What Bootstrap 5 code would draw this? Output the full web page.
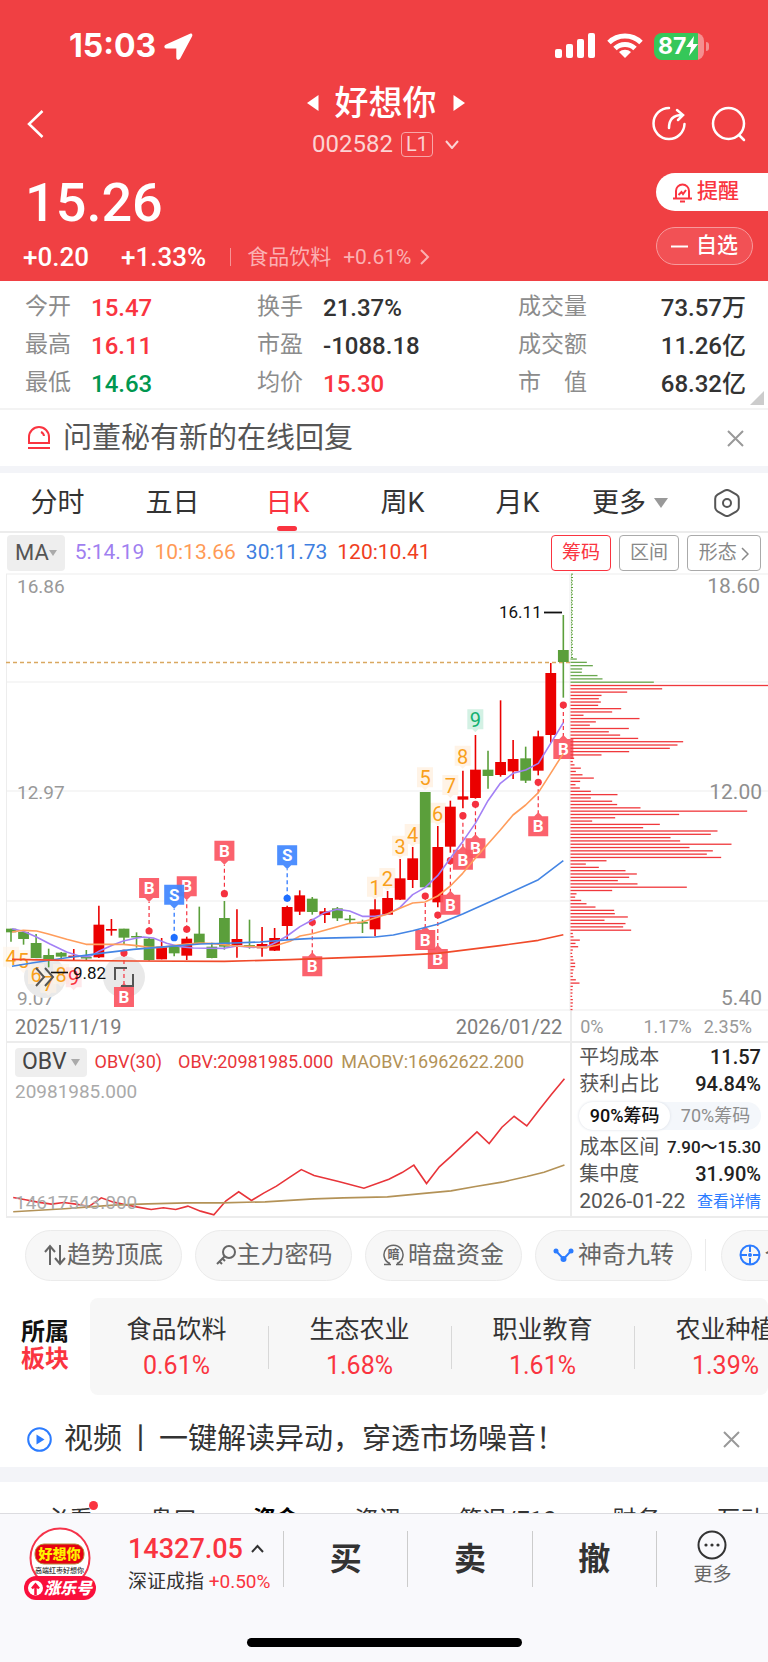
<!DOCTYPE html>
<html lang="zh-CN">
<head>
<meta charset="utf-8">
<meta name="viewport" content="width=device-width, initial-scale=1">
<title>好想你 002582</title>
<link rel="stylesheet" href="https://cdn.jsdelivr.net/npm/bootstrap@5.3.0/dist/css/bootstrap.min.css">
<style>
  :root { --up: #fa3440; --brand: #f04043; --grey: #8c8c8c; --ink: #333; --rule: #ececec; --band: #f3f4f8; }
  body { font-family: Roboto, "Noto Sans CJK SC", sans-serif; color: var(--ink); background: #fff; line-height: 1.2; overflow-x: hidden; }
  button { font-family: inherit; color: inherit; background: none; border: 0; padding: 0; white-space: nowrap; line-height: inherit; }
  a { color: inherit; text-decoration: none; white-space: nowrap; }
  svg { display: block; flex: none; }
  .nowrap { white-space: nowrap; }
  .up { color: var(--up); } .down { color: #00974f; }

  .hero { background: var(--brand); color: #fff; height: 281px; }
  .status { height: 83px; padding: 9px 59px 0 69px; }
  .clock { font: 700 32px/32px Inter, sans-serif; }
  .battery { width: 50px; height: 27px; border-radius: 8px; background: linear-gradient(90deg, #35c759 88%, #f58f90 88%); font: 700 23px/27px Inter, sans-serif; }
  .nub { width: 3px; height: 9px; border-radius: 0 4px 4px 0; background: #f58f90; margin-left: 2px; }
  .titlebar { height: 82px; padding: 0 22px 0 27px; }
  .title-block { padding-left: 75px; }
  .stock-name { font-size: 34px; line-height: 40px; font-weight: 500; margin: 0; }
  .code { font-size: 24px; line-height: 42px; color: #fbd3d4; }
  .level { border: 1px solid #f8a6a8; border-radius: 4px; font-size: 20px; line-height: 23px; padding: 0 4px; }
  .price { font-size: 54px; line-height: 60px; font-weight: 500; padding: 8px 0 0 25px; }
  .delta { font-size: 26px; line-height: 32px; font-weight: 500; padding: 8px 0 0 23px; }
  .industry { font-size: 21px; color: #fbb0b2; }
  .sep-v { width: 1px; height: 18px; background: #f79496; }
  .remind { width: 112px; height: 38px; border-radius: 19px 0 0 19px; background: #fff; color: var(--up); font-size: 21px; font-weight: 500; }
  .fav { width: 97px; height: 38px; border-radius: 19px; border: 1px solid #f79a9c; background: #f25155; font-size: 21px; font-weight: 500; margin-right: 15px; }

  .quotes { display: grid; grid-template-columns: 232fr 261fr 228fr; padding: 8px 22px 5px 25px; height: 127px; position: relative; font-size: 23px; line-height: 38px; }
  .quotes dt { font-weight: 400; color: var(--grey); line-height: 36px; }
  .quotes dd { margin: 0; font-size: 24px; font-weight: 500; }
  .corner { position: absolute; right: 4px; bottom: 3px; }
  .notice { height: 58px; border-top: 2px solid #f3f3f3; padding: 0 24px 0 27px; font-size: 29px; color: #555; }
  .band { height: 7px; background: var(--band); }
  .band-lg { height: 15px; }
  .periods { display: grid; grid-template-columns: repeat(5, 115fr) 110fr 83fr; align-items: center; justify-items: center; height: 60px; padding-top: 2px; border-bottom: 2px solid var(--rule); font-size: 27px; }
  .periods .active { color: var(--up); position: relative; }
  .periods .active::after { content: ""; position: absolute; left: 50%; margin-left: -10px; bottom: -12px; width: 20px; height: 5px; border-radius: 3px; background: var(--up); }
  .ma-row { height: 40px; padding: 0 7px; font-size: 21px; gap: 10px; }
  .drop { background: #eee; border-radius: 4px; color: #555; font-size: 22px; height: 36px; padding: 0 8px; }
  .outline { border: 1px solid #aaa; border-radius: 4px; height: 36px; width: 60px; color: #888; font-size: 19px; }
  .outline.wide { width: 74px; }
  .outline.on { border-color: var(--up); color: var(--up); }

  .lower { display: grid; grid-template-columns: 566fr 196fr; margin-left: 6px; border-left: 1px solid var(--rule); }
  .lower > * { border-bottom: 2px solid var(--rule); }
  .lower > :nth-child(odd) { border-right: 2px solid var(--rule); }
  .dates { height: 32px; font-size: 20px; line-height: 32px; color: #7d7d7d; padding: 0 8px; }
  .scale { font-size: 18px; color: #999; }
  .obv-row { height: 35px; padding: 3px 0 0 8px; font-size: 18px; }
  .obv-row .drop { height: 29px; font-size: 23px; color: #444; padding: 0 7px; }
  .cost { font-size: 20px; padding: 1px 7px 0 7px; line-height: 27px; color: #555; }
  .cost b { font-weight: 500; color: #222; }
  .cost .range { font-size: 17px; }
  .cost .day { font-size: 21px; }
  .cost .detail { font-size: 16px; color: #2c7cff; }
  .pill { height: 28px; border-radius: 14px; background: #f4f7fb; font-size: 18px; line-height: 28px; margin: 4px 0; }
  .pill button { flex: 1; border-radius: 14px; color: #8e8e8e; }
  .pill .on { background: #fff; color: #111; font-weight: 500; box-shadow: 0 0 3px #d9dde4; }

  .tools { padding: 12px 0 17px 25px; gap: 13px; overflow: hidden; }
  .tool { flex: none; width: 157px; height: 51px; border: 1px solid #ebebeb; border-radius: 26px; background: #f7f7f7; color: #666; font-size: 24px; }
  .tool-sep { width: 1px; height: 32px; background: #eaeaea; flex: none; margin-right: 2px; }
  .sector-title { width: 90px; font-size: 24px; font-weight: 700; line-height: 27px; color: #111; }
  .sectors { background: #f7f7f7; border-radius: 8px; height: 97px; overflow: hidden; }
  .sector { flex: 0 0 183px; font-size: 25px; line-height: 36px; position: relative; padding-top: 3px; }
  .sector:first-child { flex-basis: 178px; padding-right: 5px; }
  .sector + .sector::before { content: ""; position: absolute; left: 0; top: 17px; height: 43px; border-left: 1px solid #d8d8d8; }
  .video { height: 72px; padding: 18px 28px 0 27px; font-size: 29px; }
  .subtabs { height: 31px; overflow: hidden; padding: 22px 0 0 45px; font-size: 24px; gap: 56px; line-height: 32px; }
  .dot { position: absolute; width: 9px; height: 9px; border-radius: 50%; background: var(--up); right: -5px; top: -3px; }

  .trade { height: 149px; background: #f9f9fc; border-top: 1px solid #dcdce0; position: sticky; bottom: 0; }
  .trade-row { height: 88px; padding-top: 13px; }
  .index-box { width: 155px; padding-top: 5px; }
  .index-val { font-size: 27px; line-height: 34px; font-weight: 500; }
  .index-sub { font-size: 19px; line-height: 32px; }
  .act { flex: 1 1 124px; font-size: 32px; font-weight: 700; border-left: 1px solid #ccc; height: 56px; margin-top: 4px; }
  .more { flex: 0 0 112px; border-left: 1px solid #ccc; height: 56px; margin-top: 4px; font-size: 19px; color: #666; }
  .home { width: 275px; height: 9px; border-radius: 5px; background: #000; margin: 36px auto 0; }
</style>
</head>
<body>
<header class="hero d-flex flex-column">
  <div class="status d-flex align-items-center">
    <span class="clock">15:03</span>
    <svg class="ms-2" width="29" height="27" viewBox="0 0 29 27"><path d="M26.500 .6 2 11.500c-2.500 1.200-2 4 .8 4h9.500v9c0 2.800 3 3.200 4.200.6L28 3.500c1-2-.2-3.300-1.500-2.900z" fill="#fff"/></svg>
    <svg class="ms-auto" width="41" height="26" viewBox="0 0 41 26" fill="#fff"><rect y="16" width="7" height="9" rx="2"/><rect x="11" y="11" width="7" height="14" rx="2"/><rect x="22" y="6" width="7" height="19" rx="2"/><rect x="33" width="7" height="25" rx="2"/></svg>
    <svg class="mx-2" width="42" height="26" viewBox="0 0 42 26" fill="none" stroke="#fff" stroke-width="5"><path d="M5 9.500a23 23 0 0 1 32 0M11 15.500a14.500 14.500 0 0 1 20 0"/><path d="M21 25l-6-6a9 9 0 0 1 12 0z" fill="#fff" stroke="none"/></svg>
    <span class="battery d-flex align-items-center ps-1">87<svg width="12" height="22" viewBox="0 0 12 22"><path d="M8 1 0 12h5l-2 9 9-12H7z" fill="#fff"/></svg></span><span class="nub"></span>
  </div>
  <div class="titlebar d-flex align-items-center">
    <button aria-label="返回"><svg width="17" height="28" viewBox="0 0 17 28" fill="none" stroke="#fff" stroke-width="2.500"><path d="M15.500 1 2 14l13.500 13"/></svg></button>
    <div class="title-block flex-grow-1 d-flex flex-column align-items-center">
      <div class="d-flex align-items-center gap-3">
        <button aria-label="上一只"><svg width="12" height="16" viewBox="0 0 12 16"><path d="M11.500 0v16L0 8z" fill="#fff"/></svg></button>
        <h1 class="stock-name nowrap">好想你</h1>
        <button aria-label="下一只"><svg width="12" height="16" viewBox="0 0 12 16"><path d="M.5 0v16L12 8z" fill="#fff"/></svg></button>
      </div>
      <div class="code d-flex align-items-center gap-2">002582 <span class="level">L1</span><svg class="ms-1" width="14" height="9" viewBox="0 0 14 9" fill="none" stroke="#fbd3d4" stroke-width="2"><path d="M1 1l6 7 6-7"/></svg></div>
    </div>
    <button aria-label="分享"><svg width="34" height="36" viewBox="0 0 34 36" fill="none" stroke="#fff" stroke-width="2.500" stroke-linecap="round"><path d="M17 2a15.500 15.500 0 1 0 15.500 16M17 22c0-8 4-13 13-13M25 4l6 5-5 5"/></svg></button>
    <button class="ms-4" aria-label="搜索"><svg width="36" height="36" viewBox="0 0 36 36" fill="none" stroke="#fff" stroke-width="2.500" stroke-linecap="round"><circle cx="18.500" cy="17.500" r="15.500"/><path d="M29 29l5 5"/></svg></button>
  </div>
  <div class="d-flex flex-grow-1">
    <div class="flex-grow-1">
      <div class="price">15.26</div>
      <div class="delta d-flex align-items-center nowrap"><span>+0.20</span><span class="ms-4 ps-2">+1.33%</span><span class="sep-v ms-4"></span><a href="#" class="industry fw-normal d-flex align-items-center ms-3">食品饮料<span class="ms-2 ps-1">+0.61%</span><svg class="ms-2" width="11" height="16" viewBox="0 0 11 16" fill="none" stroke="#fbb0b2" stroke-width="2"><path d="M2 1l7 7-7 7"/></svg></a></div>
    </div>
    <div class="d-flex flex-column align-items-start gap-3 pt-2">
      <button class="remind d-flex align-items-center ps-3"><svg class="me-1" width="21" height="21" viewBox="0 0 21 21" fill="none" stroke="#fa3440" stroke-width="2"><path d="M4 16V9a6.500 6.500 0 0 1 13 0v7M1 16.500h19M8 19.500h5M6.500 13l3-3 1.500 2 3-4"/></svg>提醒</button>
      <button class="fav d-flex align-items-center justify-content-center gap-2"><svg width="17" height="3"><path d="M0 1.500h17" stroke="#fff" stroke-width="2"/></svg>自选</button>
    </div>
  </div>
</header>

<main>
  <section class="quotes nowrap">
    <dl class="m-0">
      <div class="d-flex"><dt class="me-3 pe-1">今开</dt><dd class="up">15.47</dd></div>
      <div class="d-flex"><dt class="me-3 pe-1">最高</dt><dd class="up">16.11</dd></div>
      <div class="d-flex"><dt class="me-3 pe-1">最低</dt><dd class="down">14.63</dd></div>
    </dl>
    <dl class="m-0">
      <div class="d-flex"><dt class="me-3 pe-1">换手</dt><dd>21.37%</dd></div>
      <div class="d-flex"><dt class="me-3 pe-1">市盈</dt><dd>-1088.18</dd></div>
      <div class="d-flex"><dt class="me-3 pe-1">均价</dt><dd class="up">15.30</dd></div>
    </dl>
    <dl class="m-0">
      <div class="d-flex justify-content-between"><dt>成交量</dt><dd>73.57万</dd></div>
      <div class="d-flex justify-content-between"><dt>成交额</dt><dd>11.26亿</dd></div>
      <div class="d-flex justify-content-between"><dt>市　值</dt><dd>68.32亿</dd></div>
    </dl>
    <svg class="corner" width="14" height="14"><path d="M14 0v14H0z" fill="#ccc"/></svg>
  </section>

  <section class="notice d-flex align-items-center nowrap">
    <svg width="24" height="24" viewBox="0 0 24 24" fill="none" stroke="#fa3440" stroke-width="2"><path d="M2 17v-6a10 10 0 0 1 20 0v6zM1 22h22M14 6a5 5 0 0 1 3 4"/></svg>
    <span class="ms-2 ps-1">问董秘有新的在线回复</span>
    <button class="ms-auto" aria-label="关闭"><svg width="17" height="17" viewBox="0 0 17 17" stroke="#999" stroke-width="2"><path d="M1 1l15 15M16 1 1 16"/></svg></button>
  </section>
  <div class="band"></div>

  <nav class="periods">
    <a href="#">分时</a><a href="#">五日</a><a href="#" class="active">日K</a><a href="#">周K</a><a href="#">月K</a>
    <button class="d-flex align-items-center gap-2">更多 <svg width="14" height="10"><path d="M0 0h14L7 10z" fill="#999"/></svg></button>
    <button aria-label="设置"><svg width="26" height="28" viewBox="0 0 26 28" fill="none" stroke="#555" stroke-width="2"><path d="M10.500 1.700a5 5 0 0 1 5 0l7 4a5 5 0 0 1 2.300 4v8.600a5 5 0 0 1-2.300 4l-7 4a5 5 0 0 1-5 0l-7-4a5 5 0 0 1-2.300-4V9.700a5 5 0 0 1 2.300-4z"/><circle cx="13" cy="14" r="4"/></svg></button>
  </nav>

  <div class="ma-row d-flex align-items-center nowrap">
    <button class="drop d-flex align-items-center">MA<svg width="8" height="6"><path d="M0 0h8L4 6z" fill="#aaa"/></svg></button>
    <span style="color:#a07ff0">5:14.19</span><span style="color:#ff9a56">10:13.66</span><span style="color:#3f7fe0">30:11.73</span><span style="color:#f03e1e">120:10.41</span>
    <div class="d-flex gap-2 ms-auto">
      <button class="outline on">筹码</button><button class="outline">区间</button><button class="outline wide">形态 <svg class="d-inline" width="8" height="14" viewBox="0 0 8 14" fill="none" stroke="#888" stroke-width="1.500"><path d="M1 1l6 6-6 6"/></svg></button>
    </div>
  </div>

  <svg id="kline" class="w-100" viewBox="0 0 768 438" role="img" aria-label="日K线与筹码分布" font-family="Roboto, sans-serif"></svg>

  <section class="lower nowrap">
    <div class="dates d-flex justify-content-between"><span>2025/11/19</span><span>2026/01/22</span></div>
    <div class="dates scale d-flex"><span>0%</span><span class="ms-auto">1.17%</span><span class="mx-2 ps-1">2.35%</span></div>
    <div>
      <div class="obv-row d-flex align-items-center">
        <button class="drop d-flex align-items-center gap-1">OBV <svg width="9" height="7"><path d="M0 0h9L4.500 7z" fill="#aaa"/></svg></button>
        <span class="ms-2" style="color:#e8353a">OBV(30)</span><span class="ms-3" style="color:#e8353a">OBV:20981985.000</span><span class="ms-2" style="color:#b39257">MAOBV:16962622.200</span>
      </div>
      <svg id="obv" class="w-100" viewBox="6 1078 564 138" role="img" aria-label="OBV" font-family="Roboto, sans-serif"></svg>
    </div>
    <div class="cost">
      <div class="d-flex justify-content-between"><span>平均成本</span><b>11.57</b></div>
      <div class="d-flex justify-content-between"><span>获利占比</span><b>94.84%</b></div>
      <div class="pill d-flex"><button class="on">90%筹码</button><button>70%筹码</button></div>
      <div class="d-flex justify-content-between"><span>成本区间</span><b class="range">7.90～15.30</b></div>
      <div class="d-flex justify-content-between"><span>集中度</span><b>31.90%</b></div>
      <div class="d-flex justify-content-between"><span class="day">2026-01-22</span><a href="#" class="detail">查看详情</a></div>
    </div>
  </section>

  <section class="tools d-flex align-items-center">
    <button class="tool d-flex align-items-center justify-content-center"><svg width="23" height="22" viewBox="0 0 23 22" fill="none" stroke="#666" stroke-width="2"><path d="M6 21V3M1 8l5-6 5 6M16 1v18M11 14l5 6 5-6"/></svg>趋势顶底</button>
    <button class="tool d-flex align-items-center justify-content-center"><svg width="22" height="22" viewBox="0 0 22 22" fill="none" stroke="#666" stroke-width="2"><circle cx="14" cy="8" r="6"/><path d="M10 12l-8 8M4 17l3 3M7 14l3 3"/></svg>主力密码</button>
    <button class="tool d-flex align-items-center justify-content-center"><svg class="me-1" width="21" height="22" viewBox="0 0 21 22"><path d="M7 19.500a9.500 9.500 0 1 1 7 0M1 20.500h7M13 20.500h7" fill="none" stroke="#666" stroke-width="1.500"/><text x="10.500" y="15" font-size="12" font-weight="700" text-anchor="middle" fill="#666">暗</text></svg>暗盘资金</button>
    <button class="tool d-flex align-items-center justify-content-center"><svg class="me-1" width="21" height="14" viewBox="0 0 21 14" fill="#2c7cff"><path d="M3 3l7.500 8L18 3" fill="none" stroke="#2c7cff" stroke-width="2"/><circle cx="3" cy="3" r="2.500"/><circle cx="18" cy="3" r="2.500"/><circle cx="10.500" cy="11" r="3"/></svg>神奇九转</button>
    <span class="tool-sep"></span>
    <button class="tool d-flex align-items-center justify-content-center"><svg class="me-1" width="22" height="22" viewBox="0 0 22 22" fill="none" stroke="#2c7cff" stroke-width="2"><circle cx="11" cy="11" r="9.500"/><path d="M11 1v7M11 14v7M1 11h7M14 11h7"/><circle cx="11" cy="11" r="1"/></svg>个股诊断</button>
  </section>

  <section class="d-flex align-items-center">
    <div class="sector-title flex-shrink-0 text-center">所属<br><span class="up">板块</span></div>
    <div class="sectors d-flex align-items-center flex-grow-1 text-center nowrap">
      <a href="#" class="sector">食品饮料<div class="up">0.61%</div></a>
      <a href="#" class="sector">生态农业<div class="up">1.68%</div></a>
      <a href="#" class="sector">职业教育<div class="up">1.61%</div></a>
      <a href="#" class="sector">农业种植<div class="up">1.39%</div></a>
    </div>
  </section>

  <section class="video d-flex align-items-center nowrap">
    <svg width="25" height="25" viewBox="0 0 25 25"><circle cx="12.500" cy="12.500" r="11.300" fill="none" stroke="#2c7cff" stroke-width="2"/><path d="M9.500 7.500v10l8-5z" fill="#2c7cff"/></svg>
    <a href="#" class="ms-2 ps-1">视频<span class="mx-1">丨</span>一键解读异动，穿透市场噪音！</a>
    <button class="ms-auto" aria-label="关闭"><svg width="17" height="17" viewBox="0 0 17 17" stroke="#999" stroke-width="2"><path d="M1 1l15 15M16 1 1 16"/></svg></button>
  </section>
  <div class="band band-lg"></div>
  <nav class="subtabs d-flex">
    <a href="#" class="position-relative">必看<span class="dot"></span></a><a href="#">盘口</a><a href="#" class="fw-bold text-black fs-4">资金</a><a href="#">资讯</a><a href="#">简况/F10</a><a href="#">财务</a><a href="#">互动</a>
  </nav>
</main>

<footer class="trade">
  <div class="trade-row d-flex align-items-start">
    <a href="#" class="ps-4 pe-4 me-2" aria-label="涨乐号">
      <svg width="72" height="75" viewBox="0 0 72 75" font-family="Noto Sans CJK SC, sans-serif" font-weight="900" text-anchor="middle">
        <circle cx="36" cy="31" r="29.500" fill="#fff" stroke="#f5334a" stroke-width="2"/>
        <rect x="11" y="17" width="49" height="20" rx="9" fill="#e60012" stroke="#b98b3a"/>
        <text x="35.500" y="32" font-size="14" fill="#fff200">好想你</text>
        <text x="35.500" y="46" font-size="7" font-weight="500" fill="#333">高端红枣好想你</text>
        <rect y="49" width="72" height="24" rx="12" fill="#fa0f3c"/>
        <circle cx="11.500" cy="61" r="7.500" fill="#fff"/><path d="M11.500 68v-9M8 61.500l3.500-4 3.500 4" fill="none" stroke="#fa0f3c" stroke-width="2.500"/>
        <text x="44" y="67" font-size="16" fill="#fff" font-style="italic">涨乐号</text>
      </svg>
    </a>
    <div class="index-box nowrap">
      <div class="index-val up d-flex align-items-center">14327.05<svg class="ms-2" width="13" height="9" viewBox="0 0 13 9" fill="none" stroke="#333" stroke-width="2"><path d="M1 8l5.500-6L12 8"/></svg></div>
      <div class="index-sub">深证成指 <span class="up">+0.50%</span></div>
    </div>
    <button class="act">买</button><button class="act">卖</button><button class="act">撤</button>
    <button class="more d-flex flex-column align-items-center justify-content-center gap-1"><svg width="30" height="30" viewBox="0 0 30 30"><circle cx="15" cy="15" r="13.500" fill="none" stroke="#333" stroke-width="2"/><g fill="#333"><circle cx="9" cy="15" r="1.600"/><circle cx="15" cy="15" r="1.600"/><circle cx="21" cy="15" r="1.600"/></g></svg>更多</button>
  </div>
  <div class="home"></div>
</footer>

<script src="https://cdn.jsdelivr.net/npm/bootstrap@5.3.0/dist/js/bootstrap.bundle.min.js"></script>
<script>
  // Chart data is stored in thirds of a chart unit; X and Y convert to drawing units.
  const X = v => v / 3, Y = v => (v - 39) / 3, cx = i => 11 + 12.553 * i;
  const out = [];
  const add = s => out.push(s);
  const rect = (x, y, w, h, f, extra = '') => `<rect x="${x}" y="${y}" width="${w}" height="${h}" fill="${f}" ${extra}/>`;
  const line = (x1, y1, x2, y2, c, w = 1, extra = '') => `<line x1="${x1}" y1="${y1}" x2="${x2}" y2="${y2}" stroke="${c}" stroke-width="${w}" ${extra}/>`;
  const text = (x, y, s, size, fill, extra = '') => `<text x="${x}" y="${y}" font-size="${size}" fill="${fill}" ${extra}>${s}</text>`;

  // grid
  [1, 109, 218, 328].forEach(y => add(line(6, y, 768, y, '#ededed')));
  add(line(6, 437, 768, 437, '#ededed'));
  add(line(6.5, 1, 6.5, 438, '#ededed'));
  add(line(570, 1, 570, 438, '#ededed'));
  add(line(6, 89.5, 570, 89.5, '#d9a860', 1.5, 'stroke-dasharray="4 3"'));
  add(text(17, 20, '16.86', 19, '#999'));
  add(text(17, 226, '12.97', 19, '#999'));
  add(text(17, 432, '9.07', 19, '#999'));

  // round buttons under the candles
  add(`<circle cx="45" cy="404" r="21" fill="#e9e9e9"/><circle cx="124" cy="404" r="21" fill="#e9e9e9"/>`);

  // nine-turn counters
  const turns = [[33,1190,4],[70,1200,5],[108,1242,6],[145,1268,7],[183,1242,8],[221,1252,9,'#fa3440','#fdd9dc'],[1125,980,1],[1162,954,2],[1200,857,3],[1238,822,4],[1275,652,5],[1313,758,6],[1351,675,7],[1388,587,8],[1426,478,9,'#12b070','#d3f1e4']];
  turns.forEach(([x, y, n, c = '#f9a01b', b = '#fff3e6']) => {
    const px = X(x), py = Y(y);
    add(`<path d="M${px - 8} ${py - 10}h16v20h-5l-3 3-3-3h-5z" fill="${b}" opacity="${x < 240 ? .6 : 1}"/>`);
    add(text(px, py + 8, n, 20, c, 'text-anchor="middle"'));
  });

  // candles: colour, high, body top, body bottom, low
  const candles = 'g1106,1106,1117,1145 g1112,1116,1137,1154 g1122,1149,1194,1194 g1166,1185,1198,1222 g1176,1178,1190,1198 r1167,1187,1191,1203 g1170,1191,1195,1202 r1037,1094,1192,1194 r1077,1107,1112,1127 g1106,1106,1133,1155 g1117,1128,1132,1163 g1134,1136,1200,1202 r1134,1160,1198,1198 g1155,1158,1180,1189 r1130,1136,1187,1200 g1040,1121,1150,1152 g1148,1160,1194,1195 g1023,1074,1160,1169 r1048,1137,1155,1193 g1079,1155,1158,1166 r1101,1152,1165,1190 r1104,1134,1172,1173 r1037,1041,1098,1137 r991,1006,1055,1065 g1011,1016,1056,1064 r1044,1054,1065,1089 g1041,1045,1075,1083 g1065,1076,1080,1090 g1079,1086,1091,1119 r1018,1048,1108,1129 r993,1014,1064,1065 r897,955,1019,1020 r861,895,960,984 g696,696,982,984 r798,861,1027,1042 r722,740,860,878 r632,709,719,745 r525,629,714,716 g572,629,648,686 r421,606,645,650 r540,597,634,657 g560,595,662,669 r512,529,632,646 r309,339,525,549 g165,270,306,413';
  candles.split(' ').forEach((s, i) => {
    const c = s[0] === 'g' ? '#5b9f3b' : '#eb0000';
    const [h, t, b, l] = s.slice(1).split(',').map(v => Y(+v));
    add(line(cx(i), h, cx(i), l, c, 1.6));
    const left = Math.max(6, cx(i) - 5.4);
    add(rect(left, t, cx(i) + 5.4 - left, Math.max(b - t, 1.5), c));
  });

  // trade markers: candle index, letter, dot position, direction
  [[11,'B',1113,-1],[14,'B',1108,-1],[13,'S',1133,-1],[17,'B',1001,-1],[22,'S',1015,-1],[9,'B',1179,1],[24,'B',1087,1],[33,'B',1008,1],[34,'B',1065,1],[35,'B',902,1],[37,'B',733,1],[36,'B',767,1],[42,'B',667,1],[44,'B',435,1]].forEach(([i, k, d, dir]) => {
    const x = cx(i), y = Y(d), dark = k === 'B' ? '#f5313f' : '#1f6fff';
    const top = dir > 0 ? y + 34 : y - 53;
    const fill = k === 'B' ? '#fb5561' : '#3f86ff';
    add(line(x, y, x, dir > 0 ? top - 3 : top + 24, dark, 1.2, 'stroke-dasharray="4 3"'));
    add(`<circle cx="${x}" cy="${y}" r="3.6" fill="${dark}"/>`);
    const tip = dir > 0 ? `M${x - 10} ${top}h6l4-4 4 4h6v20h-20z` : `M${x - 10} ${top}h20v20h-6l-4 4-4-4h-6z`;
    add(`<path d="${tip}" fill="${fill}" opacity=".92"/>`);
    add(text(x, top + 16, k, 17, '#fff', 'text-anchor="middle" font-weight="700"'));
  });

  const curve = (pts, c) => add(`<polyline points="${pts.split(' ').map(p => { const [a, b] = p.split(',').map(Number); return X(a) + ',' + Y(b); }).join(' ')}" fill="none" stroke="${c}" stroke-width="1.6" stroke-linejoin="round"/>`);
  curve('36,1106 70,1114 108,1130 150,1152 200,1176 240,1189 270,1189 300,1172 340,1154 370,1143 410,1134 430,1131 460,1134 500,1150 540,1160 580,1164 673,1165 711,1158 760,1162 800,1160 830,1146 861,1128 900,1100 937,1080 974,1058 1012,1048 1049,1053 1087,1069 1125,1069 1162,1063 1200,1042 1238,1004 1275,983 1313,947 1351,895 1388,845 1426,790 1464,722 1501,670 1539,640 1577,630 1615,610 1652,550 1690,488', '#a381f5');
  curve('36,1116 70,1111 110,1113 145,1122 200,1138 258,1153 300,1153 370,1153 410,1157 447,1162 485,1162 522,1157 560,1152 600,1149 640,1151 711,1158 760,1160 800,1162 830,1156 870,1144 900,1128 937,1121 1012,1100 1049,1090 1087,1086 1125,1074 1162,1062 1200,1045 1238,1029 1275,1026 1313,1008 1351,978 1388,940 1426,895 1501,810 1539,765 1577,735 1615,698 1652,640 1690,580', '#ff9d5c');
  curve('36,1219 100,1208 200,1193 300,1180 400,1168 500,1160 600,1152 700,1149 780,1146 870,1139 940,1135 1040,1133 1125,1131 1180,1125 1238,1112 1313,1093 1388,1062 1500,1012 1615,959 1690,902', '#4485e4');
  curve('36,1198 200,1201 400,1203 673,1204 870,1199 1140,1189 1313,1180 1500,1157 1615,1141 1690,1124', '#f04a2a');

  add(text(499, 45, '16.11', 17, '#111'));
  add(line(544, 39.500, 562, 39.500, '#111', 1.8));
  add(text(73, 406, '9.82', 17, '#111'));
  add(line(51, 399.500, 68, 399.500, '#111', 1.6));
  add('<path d="M36 395l8 9-8 9M45 395l8 9-8 9M115 407v-12h12M133 401v12h-12" fill="none" stroke="#555" stroke-width="2"/>');

  // chip distribution, from the highest price downwards
  for (let y = 41; y < 293; y += 10) add(rect(571, Y(y), 2, 1, '#5b9f3b'));
  for (let y = 46; y < 293; y += 10) add(rect(571, Y(y), 1, 1, '#6aa84f'));
  const bars = [50,80,98,66,65,112,127,281,624,306,201,124,116,122,114,183,156,70,238,107,89,206,146,180,234,369,352,329,207,124,42,38,43,62,47,67,101,60,46,59,92,172,92,156,171,241,561,357,165,96,299,249,472,452,331,360,514,388,458,440,483,139,77,116,196,230,207,173,232,380,156,49,45,63,79,106,162,164,203,133,196,189,213,38,40,59,46,54,38,36,38,40,45,45,40,38,38,47,58,38,37,37,36,38,38,37,37];
  bars.forEach((b, k) => add(rect(570.5, Y(297 + 9.92 * k) - 0.6, (b - 31) / 3, 1.3, k < 8 ? '#6aa84f' : '#f0383c')));
  add(text(760, 20, '18.60', 21, '#8f8f8f', 'text-anchor="end"'));
  add(text(762, 226, '12.00', 21, '#8f8f8f', 'text-anchor="end"'));
  add(text(762, 432, '5.40', 21, '#8f8f8f', 'text-anchor="end"'));
  document.getElementById('kline').innerHTML = out.join('');

  // OBV and its moving average
  const path = (d, c) => `<polyline points="${d.map(([a, b]) => (a * 0.4898).toFixed(1) + ',' + (1010 + b / 3).toFixed(1)).join(' ')}" fill="none" stroke="${c}" stroke-width="1.6"/>`;
  const obv = [[25,563],[50,570],[75,577],[103,583],[128,578],[153,583],[180,590],[205,564],[230,577],[255,585],[280,592],[307,599],[332,594],[357,599],[382,589],[408,604],[435,615],[460,573],[486,546],[512,572],[537,550],[563,529],[589,503],[614,479],[640,497],[690,515],[742,535],[793,508],[820,488],[844,466],[870,521],[896,471],[921,438],[947,402],[973,366],[998,401],[1024,352],[1049,319],[1075,348],[1100,300],[1126,252],[1152,206]];
  const avg = [[25,606],[130,597],[230,586],[300,582],[380,579],[450,579],[540,576],[640,567],[700,564],[790,561],[870,550],[920,543],[970,530],[1024,517],[1075,500],[1110,487],[1152,465]];
  document.getElementById('obv').innerHTML = path(obv, '#e8353a') + path(avg, '#b39257')
    + text(14, 1098, '20981985.000', 19, '#aaa') + text(14, 1209, '14617543.000', 19, '#aaa');
</script>
</body>
</html>
